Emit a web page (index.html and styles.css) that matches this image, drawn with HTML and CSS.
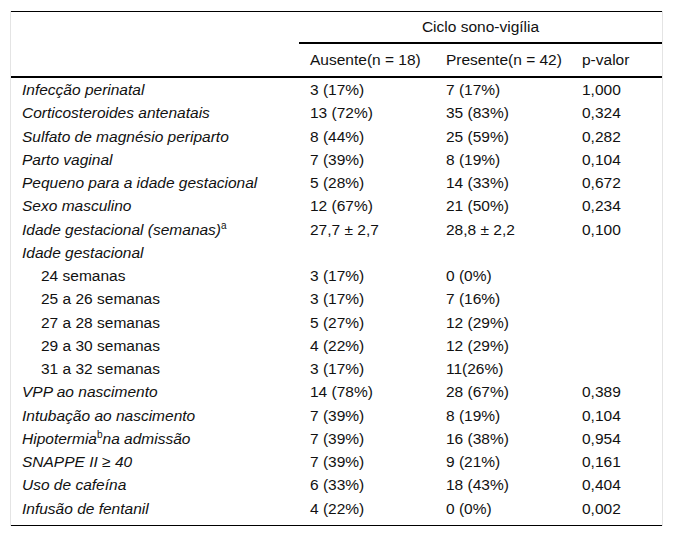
FILE: index.html
```html
<!DOCTYPE html>
<html lang="pt">
<head>
<meta charset="utf-8">
<link rel="stylesheet" href="styles.css">
</head>
<body>
<div class="wrap">
<table class="tbl">
  <colgroup>
    <col class="c1"><col class="c2"><col class="c3"><col class="c4">
  </colgroup>
  <thead>
    <tr class="h1">
      <th></th>
      <th colspan="3" class="group">Ciclo sono-vigília</th>
    </tr>
    <tr class="h2">
      <th></th>
      <th>Ausente(n = 18)</th>
      <th>Presente(n = 42)</th>
      <th>p-valor</th>
    </tr>
  </thead>
  <tbody>
    <tr><td class="lbl">Infecção perinatal</td><td>3 (17%)</td><td>7 (17%)</td><td>1,000</td></tr>
    <tr><td class="lbl">Corticosteroides antenatais</td><td>13 (72%)</td><td>35 (83%)</td><td>0,324</td></tr>
    <tr><td class="lbl">Sulfato de magnésio periparto</td><td>8 (44%)</td><td>25 (59%)</td><td>0,282</td></tr>
    <tr><td class="lbl">Parto vaginal</td><td>7 (39%)</td><td>8 (19%)</td><td>0,104</td></tr>
    <tr><td class="lbl">Pequeno para a idade gestacional</td><td>5 (28%)</td><td>14 (33%)</td><td>0,672</td></tr>
    <tr><td class="lbl">Sexo masculino</td><td>12 (67%)</td><td>21 (50%)</td><td>0,234</td></tr>
    <tr><td class="lbl">Idade gestacional (semanas)<sup>a</sup></td><td>27,7 ± 2,7</td><td>28,8 ± 2,2</td><td>0,100</td></tr>
    <tr><td class="lbl">Idade gestacional</td><td></td><td></td><td></td></tr>
    <tr><td class="sub">24 semanas</td><td>3 (17%)</td><td>0 (0%)</td><td></td></tr>
    <tr><td class="sub">25 a 26 semanas</td><td>3 (17%)</td><td>7 (16%)</td><td></td></tr>
    <tr><td class="sub">27 a 28 semanas</td><td>5 (27%)</td><td>12 (29%)</td><td></td></tr>
    <tr><td class="sub">29 a 30 semanas</td><td>4 (22%)</td><td>12 (29%)</td><td></td></tr>
    <tr><td class="sub">31 a 32 semanas</td><td>3 (17%)</td><td>11(26%)</td><td></td></tr>
    <tr><td class="lbl">VPP ao nascimento</td><td>14 (78%)</td><td>28 (67%)</td><td>0,389</td></tr>
    <tr><td class="lbl">Intubação ao nascimento</td><td>7 (39%)</td><td>8 (19%)</td><td>0,104</td></tr>
    <tr><td class="lbl">Hipotermia<sup>b</sup>na admissão</td><td>7 (39%)</td><td>16 (38%)</td><td>0,954</td></tr>
    <tr><td class="lbl">SNAPPE II ≥ 40</td><td>7 (39%)</td><td>9 (21%)</td><td>0,161</td></tr>
    <tr><td class="lbl">Uso de cafeína</td><td>6 (33%)</td><td>18 (43%)</td><td>0,404</td></tr>
    <tr class="last"><td class="lbl">Infusão de fentanil</td><td>4 (22%)</td><td>0 (0%)</td><td>0,002</td></tr>
  </tbody>
</table>
</div>
</body>
</html>
```
FILE: styles.css
```css
html, body {
  margin: 0;
  padding: 0;
  background: #fff;
}
body {
  font-family: "Liberation Sans", Arial, sans-serif;
  font-size: 15.5px;
  color: #111;
}
.wrap {
  margin: 11px 0 0 10px;
  width: 651px;
  border-left: 1px solid #e4e4e4;
  border-right: 1px solid #e4e4e4;
}
.tbl {
  width: 651px;
  border-collapse: collapse;
  table-layout: fixed;
  border-top: 1px solid #000;
  border-bottom: 1px solid #000;
}
.c1 { width: 288px; }
.c2 { width: 136px; }
.c3 { width: 136px; }
.c4 { width: 91px; }
th, td {
  text-align: left;
  font-weight: normal;
  padding: 3px 11px;
  line-height: 17.25px;
  vertical-align: middle;
  white-space: nowrap;
}
.h1 th {
  height: 24px;
}
.h1 th.group {
  text-align: center;
  border-bottom: 2px solid #000;
}
.h2 th {
  height: 26px;
  border-bottom: 2px solid #000;
}
td.lbl {
  font-style: italic;
}
td.sub {
  padding-left: 30px;
}
tr.last td {
  padding-bottom: 8px;
}
sup {
  font-size: 10px;
  font-style: normal;
  line-height: 0;
  vertical-align: 6px;
}
```
